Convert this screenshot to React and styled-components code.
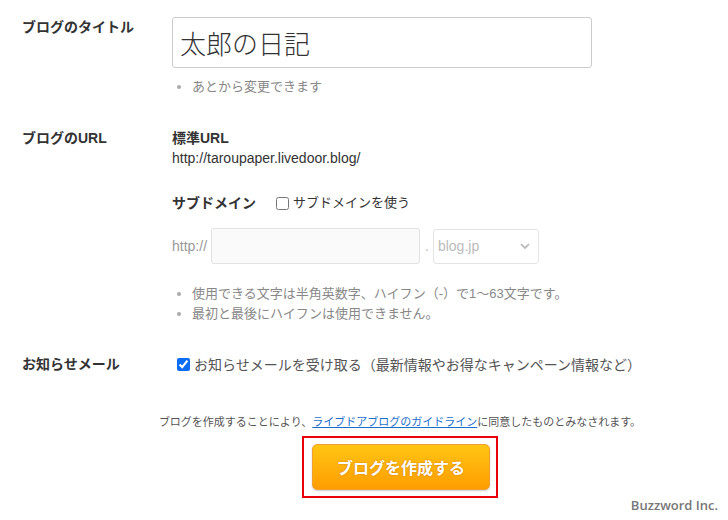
import React from "react";
import styled, { createGlobalStyle } from "styled-components";

const Global = createGlobalStyle`
  html, body { margin: 0; padding: 0; background: #fff; }
  body {
    font-family: "Liberation Sans", "Noto Sans CJK JP", sans-serif;
    color: #333;
    width: 728px;
    height: 520px;
    overflow: hidden;
  }
`;

const Page = styled.div`
  position: relative;
  width: 728px;
  height: 520px;
  padding-top: 17px;
  box-sizing: border-box;
`;

const Row = styled.div`
  display: grid;
  grid-template-columns: 150px 1fr;
  padding-left: 22px;
  margin-top: ${(p) => p.$gap || 0}px;
`;

const Label = styled.div`
  font-size: 14px;
  font-weight: bold;
  line-height: 20px;
  color: #333;
`;

const Field = styled.div`
  display: flex;
  flex-direction: column;
  align-items: flex-start;
`;

const TitleInput = styled.input`
  box-sizing: border-box;
  width: 420px;
  height: 51px;
  border: 1px solid #ccc;
  border-radius: 3px;
  padding: 0 7px;
  font-family: "Liberation Sans", "Noto Sans CJK JP", sans-serif;
  font-size: 26px;
  font-weight: 300;
  color: #333;
  outline: none;
`;

const Hints = styled.ul`
  margin: ${(p) => p.$mt || 0}px 0 0;
  padding: 0 0 0 20px;
  list-style: disc;
  font-size: 13px;
  line-height: 20px;
  li::marker { color: #aaa; font-size: 13px; }
`;

const Hint = styled.li`
  color: #888;
`;

const SubHeading = styled.div`
  font-size: 14px;
  font-weight: bold;
  line-height: 20px;
  color: #333;
  margin-top: ${(p) => p.$mt || 0}px;
  display: flex;
  align-items: center;
`;

const UrlText = styled.div`
  font-size: 14px;
  line-height: 20px;
  color: #333;
`;

const CheckLabel = styled.label`
  display: inline-flex;
  align-items: center;
  font-weight: normal;
  font-size: ${(p) => p.$size || 14}px;
  color: ${(p) => p.$color || "#333"};
  margin-left: ${(p) => p.$ml || 0}px;
`;

const Check = styled.input`
  width: 13px;
  height: 13px;
  margin: 0 4px 0 ${(p) => p.$ml || 0}px;
  accent-color: #0b6cf5;
`;

const DomainRow = styled.div`
  display: flex;
  align-items: center;
  margin-top: 15px;
  font-size: 14px;
  color: #999;
`;

const SubInput = styled.input`
  box-sizing: border-box;
  width: 209px;
  height: 36px;
  margin-left: 4px;
  border: 1px solid #e2e2e2;
  border-radius: 3px;
  background: #fafafa;
`;

const Dot = styled.span`
  margin: 0 4px 0 5px;
  color: #bbb;
`;

const FakeSelect = styled.div`
  box-sizing: border-box;
  width: 106px;
  height: 35px;
  border: 1px solid #e4e4e4;
  border-radius: 3px;
  background: #fff;
  display: flex;
  align-items: center;
  justify-content: space-between;
  padding: 0 8px 0 4px;
  color: #bbb;
  font-size: 14px;
`;

const Footer = styled.div`
  margin-top: 40px;
  padding-left: 72px;
  display: flex;
  flex-direction: column;
  align-items: center;
`;

const Agree = styled.p`
  margin: 0;
  font-size: 11px;
  line-height: 16px;
  color: #555;
  a { color: #1a6fcc; text-decoration: underline; }
`;

const Highlight = styled.div`
  margin-top: 6px;
  border: 2px solid #e8000b;
  padding: 6px 6px 6px 8px;
`;

const CreateButton = styled.button`
  width: 178px;
  height: 46px;
  border: 1px solid #f0a030;
  border-radius: 5px;
  background: linear-gradient(#ffc514, #ff9d00);
  box-shadow: 0 1px 2px rgba(0, 0, 0, 0.2);
  color: #fff;
  font-family: "Liberation Sans", "Noto Sans CJK JP", sans-serif;
  font-size: 16px;
  font-weight: bold;
  text-shadow: 0 0 2px rgba(160, 90, 0, 0.6);
  cursor: pointer;
`;

const Credit = styled.div`
  position: absolute;
  right: 10px;
  bottom: 6px;
  font-family: "Open Sans", "Liberation Sans", sans-serif;
  font-weight: 600;
  font-size: 13px;
  color: #777;
`;

const Chevron = () => (
  <svg width="10" height="7" viewBox="0 0 10 7">
    <path d="M1 1.2 L5 5 L9 1.2" fill="none" stroke="#bbb" strokeWidth="1.8" />
  </svg>
);

export default function App() {
  return (
    <>
      <Global />
      <Page>
        <Row>
          <Label>ブログのタイトル</Label>
          <Field>
            <TitleInput defaultValue="太郎の日記" />
            <Hints $mt={9}>
              <Hint>あとから変更できます</Hint>
            </Hints>
          </Field>
        </Row>

        <Row $gap={31}>
          <Label>ブログのURL</Label>
          <Field>
            <SubHeading>標準URL</SubHeading>
            <UrlText>http://taroupaper.livedoor.blog/</UrlText>
            <SubHeading $mt={25}>
              サブドメイン
              <CheckLabel $ml={20} $size={13}>
                <Check type="checkbox" />
                サブドメインを使う
              </CheckLabel>
            </SubHeading>
            <DomainRow>
              http://
              <SubInput disabled />
              <Dot>.</Dot>
              <FakeSelect>
                blog.jp
                <Chevron />
              </FakeSelect>
            </DomainRow>
            <Hints $mt={20}>
              <Hint>使用できる文字は半角英数字、ハイフン（-）で1〜63文字です。</Hint>
              <Hint>最初と最後にハイフンは使用できません。</Hint>
            </Hints>
          </Field>
        </Row>

        <Row $gap={30}>
          <Label>お知らせメール</Label>
          <Field>
            <CheckLabel $color="#555">
              <Check type="checkbox" defaultChecked $ml={5} />
              お知らせメールを受け取る（最新情報やお得なキャンペーン情報など）
            </CheckLabel>
          </Field>
        </Row>

        <Footer>
          <Agree>
            ブログを作成することにより、<a href="#">ライブドアブログのガイドライン</a>に同意したものとみなされます。
          </Agree>
          <Highlight>
            <CreateButton>ブログを作成する</CreateButton>
          </Highlight>
        </Footer>

        <Credit>Buzzword Inc.</Credit>
      </Page>
    </>
  );
}
